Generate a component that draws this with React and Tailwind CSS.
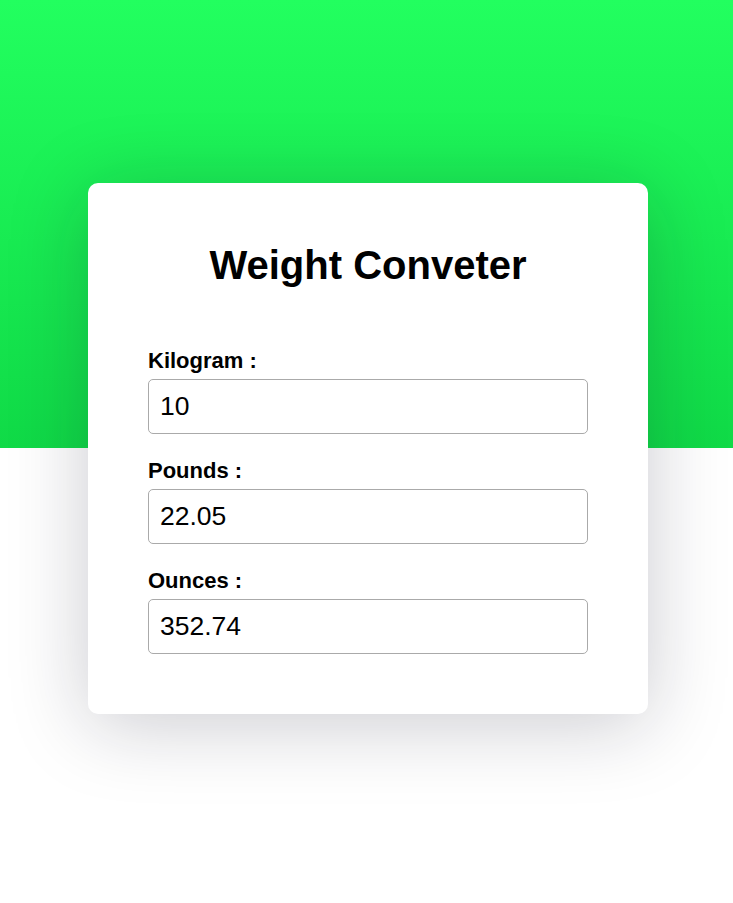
import React, { useState } from "react";

const round2 = (n) => Math.round(n * 100) / 100;

const Field = ({ label, value, onChange }) => (
  <div className="flex flex-col gap-[6px]">
    <label className="text-[22px] font-bold leading-[24px] text-black">{label}</label>
    <input
      type="text"
      value={value}
      onChange={(e) => onChange(e.target.value)}
      className="h-[55px] w-full rounded-[5px] border border-[#aaaaaa] bg-white px-[11px] text-[26.5px] text-black outline-none"
    />
  </div>
);

const App = () => {
  const [kg, setKg] = useState("10");
  const num = parseFloat(kg) || 0;

  return (
    <div
      className="min-h-screen bg-[linear-gradient(to_bottom,#22ff5f_0,#10da47_448px,#ffffff_448px)] pt-[183px] pb-[189px]"
      style={{ fontFamily: '"Liberation Sans", Arial, sans-serif' }}
    >
      <div className="ml-[88px] w-[560px] rounded-[10px] bg-white p-[60px] shadow-[0_10px_80px_rgba(20,20,40,0.22)]">
        <h1 className="mb-[61px] text-center text-[40px] font-bold leading-[45px] text-black">Weight Conveter</h1>
        <div className="flex flex-col gap-[25px]">
          <Field label="Kilogram :" value={kg} onChange={setKg} />
          <Field label="Pounds :" value={String(round2(num * 2.20462))} onChange={(v) => setKg(String(round2((parseFloat(v) || 0) / 2.20462)))} />
          <Field label="Ounces :" value={String(round2(num * 35.274))} onChange={(v) => setKg(String(round2((parseFloat(v) || 0) / 35.274)))} />
        </div>
      </div>
    </div>
  );
};

export default App;
